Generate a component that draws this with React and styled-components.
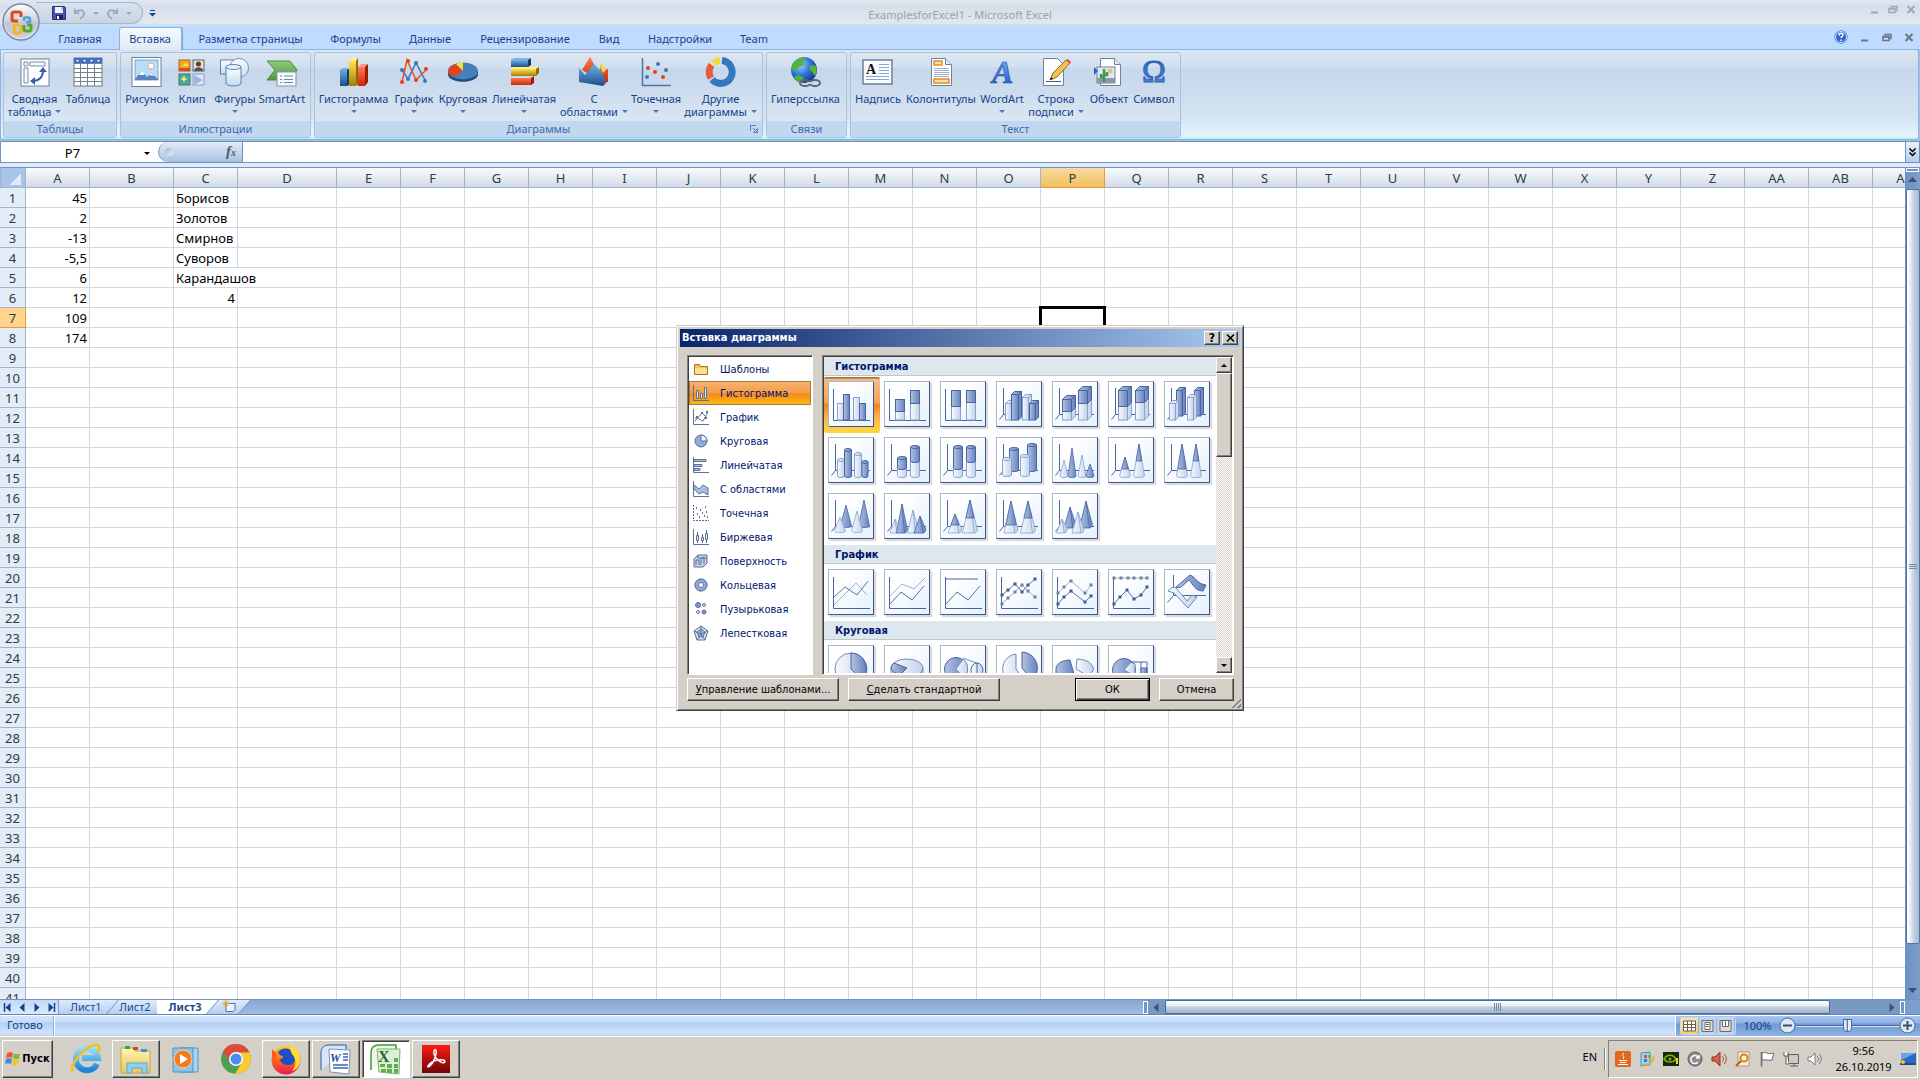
import React from 'react';
import styled, { createGlobalStyle } from 'styled-components';

const UI = `"Noto Sans", "Open Sans", sans-serif`;
const DLG = `"DejaVu Sans Condensed", "Noto Sans", sans-serif`;

const GlobalStyle = createGlobalStyle`
  * { box-sizing: border-box; }
  html, body, #root { height: 100%; }
  body { margin: 0; overflow: hidden; font-family: ${UI}; font-size: 11px; }
  button, input { font: inherit; color: inherit; border: 0; padding: 0; margin: 0; background: none; border-radius: 0; }
  button { cursor: default; }
  svg { display: block; flex: none; overflow: visible; }
`;

const Desktop = styled.div`
  height: 100vh;
  display: flex;
  flex-direction: column;
`;

const Window = styled.main`
  position: relative;
  flex: 1;
  min-height: 0;
  display: flex;
  flex-direction: column;
  background: #a3bfe3;
`;

/* ---------- title bar ---------- */

const TitleBar = styled.header`
  position: relative;
  height: 26px;
  flex: none;
  display: grid;
  grid-template-columns: 1fr auto 1fr;
  align-items: center;
  background: linear-gradient(#dfe8f1 0, #d6deea 6px, #e2e7ee 22px, #e2e7ee 24px, #c3d8ec 24px, #dce9f7 26px);
`;

const QuickAccess = styled.div`
  margin-left: 36px;
  display: flex;
  align-items: center;
  gap: 6px;
`;

const QuickBar = styled.div`
  width: 107px;
  height: 22px;
  padding-left: 16px;
  display: flex;
  align-items: center;
  gap: 7px;
  border: 1px solid #a9b9cf;
  border-left: 0;
  border-radius: 0 12px 12px 0;
  background: linear-gradient(#d9e2ee, #c9d5e5);
`;

const IconButton = styled.button`
  display: flex;
  align-items: center;
  justify-content: center;
`;

const Title = styled.h1`
  margin: 0;
  padding-top: 2px;
  font-size: 11px;
  font-weight: 400;
  color: #a0a0a0;
`;

const WindowButtons = styled.div`
  justify-self: end;
  display: flex;
  gap: ${p => p.$gap}px;
  padding-right: ${p => p.$pad}px;
  padding-bottom: ${p => p.$lift || 0}px;
  margin-left: auto;
  align-items: center;
`;

const OfficeButton = styled.button`
  position: absolute;
  z-index: 3;
  left: 2px;
  top: 3px;
`;

/* ---------- ribbon ---------- */

const TabRow = styled.nav`
  height: 23px;
  flex: none;
  display: flex;
  align-items: flex-end;
  padding-left: 45px;
  background: #bfdbff;
`;

const RibbonTab = styled.button`
  width: ${p => p.$w}px;
  height: 22px;
  padding-top: 1px;
  text-align: center;
  white-space: nowrap;
  color: #15428b;
  position: relative;
  isolation: isolate;

  ${p => p.$active && `
    height: 23px;
    margin-bottom: -1px;
    padding-top: 0;
    &::before {
      content: '';
      position: absolute;
      z-index: -1;
      inset: 0 3px 0 4px;
      border: 1px solid #8db2e3;
      border-bottom: 0;
      border-radius: 3px 3px 0 0;
      background: linear-gradient(#f4f9ff, #e1eaf5);
      box-shadow: 1px 0 1px #7fa9dd;
    }
  `}
`;

const Ribbon = styled.section`
  height: 91px;
  flex: none;
  margin: 0 1px 2px 0;
  padding: 2px;
  display: flex;
  gap: 3px;
  border: 1px solid #8db2e3;
  border-bottom-color: #8fb2d8;
  border-radius: 0 3px 3px 3px;
  background: linear-gradient(#dbe6f4 0, #cfddeb 17px, #c6d7ed 18px, #c9d9ee 32px, #d6e5f3 68px, #e3f4ff 87px, #b6f1f7 88px);
`;

const Group = styled.div`
  width: ${p => p.$w}px;
  height: 86px;
  display: flex;
  flex-direction: column;
  border: 1px solid #a9c3de;
  border-radius: 3px;
  overflow: hidden;
  background: linear-gradient(#dde7f2 0, #d2dfee 14px, #c7d7ec 15px, #cad9ec 30px, #d9e6f3 68px);
`;

const GroupButtons = styled.div`
  flex: 1;
  display: flex;
  padding-left: 2px;
`;

const GroupLabel = styled.div`
  height: 16px;
  display: grid;
  grid-template-columns: 16px 1fr 16px;
  align-items: center;
  justify-items: center;
  line-height: 16px;
  color: #3e6aaa;
  background: #c1d8f0;
`;

const BigButton = styled.button`
  width: ${p => p.$w}px;
  padding-top: 3px;
  display: flex;
  flex-direction: column;
  align-items: center;
  color: #15428b;
  line-height: 13px;
  white-space: nowrap;

  svg { margin-bottom: 4px; }
`;

const Line = styled.span`
  height: 13px;
  display: flex;
  align-items: center;
  gap: 4px;
`;

const Caret = styled.i`
  border: 3px solid transparent;
  border-top-color: ${p => p.$color || '#4a76b5'};
  border-bottom: 0;
  ${p => p.$up && 'transform: rotate(180deg);'}
`;

/* ---------- formula bar ---------- */

const FormulaBar = styled.div`
  height: 26px;
  flex: none;
  display: flex;
  border-bottom: 1px solid #6f93bd;
  background: #dfeafa;
  padding-bottom: 4px;
  box-shadow: 0 -1px 0 #6f93bd;
`;

const NameBox = styled.label`
  width: 158px;
  padding-top: 2px;
  display: flex;
  align-items: center;
  background: #fff;
  border-bottom: 1px solid #6f93bd;
  border-left: 1px solid #6f93bd;
  font-size: 13px;

  input { width: 143px; text-align: center; outline: 0; }
`;

const FxBox = styled.div`
  width: 85px;
  background: #fff;
  border-bottom: 1px solid #6f93bd;
  border-right: 1px solid #6f93bd;
  display: flex;
`;

const FxPill = styled.div`
  flex: 1;
  display: flex;
  align-items: center;
  justify-content: space-between;
  padding: 0 6px;
  border-left: 1px solid #6f93bd;
  border-radius: 11px 0 0 11px;
  background: linear-gradient(#e4ecf7, #a9c1e3);
`;

const Knob = styled.i`
  width: 8px;
  height: 8px;
  border-radius: 50%;
  background: linear-gradient(135deg, #a8b4c6, #eef2f8);
`;

const FxButton = styled.button`
  font-family: "Liberation Serif", serif;
  font-style: italic;
  font-weight: 700;
  font-size: 15px;
  line-height: 16px;
  color: #4b5a6e;

  small { font-size: 10px; }
`;

const FormulaInput = styled.input`
  flex: 1;
  background: #fff;
  border-bottom: 1px solid #6f93bd;
  outline: 0;
`;

const ExpandButton = styled(IconButton)`
  width: 15px;
  border: 1px solid #6f93bd;
  border-top: 0;
  background: linear-gradient(#e9f0fa, #b6cdee);
`;

/* ---------- sheet ---------- */

const SheetArea = styled.div`
  flex: 1;
  min-height: 0;
  display: flex;
`;

const SheetView = styled.div`
  flex: 1;
  min-width: 0;
  overflow: hidden;
  background: #fff;
`;

const Grid = styled.table`
  table-layout: fixed;
  width: 0;
  border-collapse: separate;
  border-spacing: 0;
  font-size: 13px;
  line-height: 18px;
`;

const ColHead = styled.th`
  height: 20px;
  padding: 0;
  font-weight: 400;
  color: #27413e;
  border-right: 1px solid ${p => (p.$on ? '#f29536' : '#9eb6ce')};
  border-bottom: 1px solid ${p => (p.$on ? '#f29536' : '#9eb6ce')};
  background: ${p => (p.$on ? 'linear-gradient(#f9d99f, #f1c15f)' : 'linear-gradient(#f9fcfd, #d3dbe9)')};
`;

const Corner = styled.td`
  padding: 0;
  border: 1px solid #9eb6ce;
  border-top: 0;
  background: #a9c4e9;

  &::after {
    content: '';
    display: block;
    margin: 3px 4px 0 auto;
    width: 11px;
    height: 11px;
    background: linear-gradient(135deg, transparent 50%, #e2eaf6 50%);
  }
`;

const RowHead = styled.th`
  height: 20px;
  padding: 0;
  font-weight: 400;
  color: #27413e;
  border-right: 1px solid ${p => (p.$on ? '#f29536' : '#9eb6ce')};
  border-bottom: 1px solid ${p => (p.$on ? '#f29536' : '#9eb6ce')};
  background: ${p => (p.$on ? '#ffd58d' : '#e4ecf7')};
`;

const Cell = styled.td`
  position: relative;
  height: 20px;
  padding: 0 2px;
  white-space: nowrap;
  text-align: ${p => (p.$num ? 'right' : 'left')};
  color: #000;
  border-right: 1px solid ${p => (p.$spill ? 'transparent' : '#d0d7e5')};
  border-bottom: 1px solid #d0d7e5;
`;

const Selection = styled.div`
  position: absolute;
  inset: -2px;
  border: 3px solid #000;
`;

const VScroll = styled.div`
  width: 15px;
  flex: none;
  display: flex;
  flex-direction: column;
  align-items: center;
  background: linear-gradient(90deg, #6a8fc4, #7f9fca);
`;

const Splitter = styled.i`
  width: ${p => (p.$side ? 5 : 13)}px;
  height: ${p => (p.$side ? 13 : 4)}px;
  flex: none;
  border: 1px solid #fff;
  background: #7094c4;
`;

const ScrollArrow = styled(IconButton)`
  flex: none;
  width: ${p => (p.$side ? 17 : 15)}px;
  height: ${p => (p.$side ? 14 : 17)}px;
`;

const VThumb = styled.div`
  width: 14px;
  flex: 754;
  display: flex;
  align-items: center;
  justify-content: center;
  border: 1px solid #5375a6;
  border-radius: 2px;
  background: linear-gradient(90deg, #fff 1px, #e3e9f2 4px, #c0cedf 7px, #a9bcd4 12px);
`;

const Filler = styled.div`
  flex: ${p => p.$n};
`;

const BottomBar = styled.div`
  height: 16px;
  flex: none;
  display: flex;
  align-items: stretch;
  border-top: 1px solid #6f93bd;
  border-bottom: 1px solid #5b86bb;
  background: linear-gradient(#86a6d2, #a3bde2);
`;

const SheetNav = styled.div`
  width: 59px;
  padding-left: 4px;
  display: flex;
  align-items: center;
  gap: 5px;
  border-right: 1px solid #7f9fca;
  background: linear-gradient(#c2d8f7, #dbe9fb);
`;

const SheetTabs = styled.div`
  flex: 1;
  display: flex;
`;

const SheetTab = styled.button`
  position: relative;
  isolation: isolate;
  width: ${p => p.$w}px;
  margin-right: -12px;
  padding-right: ${p => (p.$icon ? 0 : 6)}px;
  z-index: ${p => p.$z};
  display: flex;
  align-items: flex-start;
  justify-content: center;
  line-height: 13px;
  color: #1e4a8c;
  font-weight: ${p => (p.$active ? 700 : 400)};
  background: #6f93bd;
  clip-path: polygon(0 0, 100% 0, calc(100% - 12px) 100%, 0 100%);

  &::before {
    content: '';
    position: absolute;
    z-index: -1;
    inset: 0 1px 0 0;
    background: ${p => (p.$active ? '#fff' : 'linear-gradient(#dfebfb, #b5cef0)')};
    clip-path: polygon(0 0, 100% 0, calc(100% - 12px) 100%, 0 100%);
  }
`;

const HScroll = styled.div`
  width: 762px;
  display: flex;
  align-items: center;
  background: #7898c4;
`;

const HThumb = styled.div`
  flex: 665;
  height: 14px;
  display: flex;
  align-items: center;
  justify-content: center;
  border: 1px solid #4b6a99;
  border-radius: 2px;
  background: linear-gradient(#fff 0, #e6ebf2 5px, #c4cfde 6px, #a5b6cd 12px);
`;

const ScrollCorner = styled.div`
  width: 15px;
  background: #7b9dd0;
`;

/* ---------- status bar ---------- */

const StatusBar = styled.footer`
  height: 21px;
  flex: none;
  display: flex;
  align-items: stretch;
  border-top: 1px solid #fff;
  color: #15428b;
  background: linear-gradient(#d7e6fa 0, #c6dbf8 6px, #b0cff5 7px, #d2e3f9 17px, #c0d3ef 20px);
`;

const StatusText = styled.div`
  width: 54px;
  padding-left: 7px;
  line-height: 17px;
  border-right: 1px solid #8fb0dd;
  box-shadow: 1px 0 0 #fff;
`;

const StatusRight = styled.div`
  width: 245px;
  margin-left: auto;
  padding: 0 4px 1px;
  display: flex;
  align-items: center;
  border-left: 1px solid #fff;
  background: linear-gradient(#a9c7ef 0, #8fb3e4 7px, #6f9ad2 8px, #8eb2e3 20px);
`;

const ViewButtons = styled.div`
  height: 18px;
  display: flex;
  border: 1px solid #c5daf5;
  border-radius: 2px;
`;

const ViewButton = styled(IconButton)`
  width: 18px;
  background: ${p => (p.$on ? 'linear-gradient(#fde3b0, #f8cb72)' : '#c0d4ee')};
  border-right: 1px solid #8eb0de;
`;

const Zoom = styled.label`
  flex: 1;
  min-width: 0;
  display: flex;
  align-items: center;

  span { width: 43px; text-align: center; }
`;

const ZoomRange = styled.input`
  appearance: none;
  flex: 1;
  width: 0;
  min-width: 0;
  height: 18px;
  background: linear-gradient(transparent 8px, #46699c 8px, #46699c 9px, #d5e4f7 9px, #d5e4f7 10px, transparent 10px);

  &::-webkit-slider-thumb {
    appearance: none;
    width: 9px;
    height: 13px;
    background: linear-gradient(90deg, #fff, #a9bcd9 45%, #5e7aa8 50%, #e8eff9 60%);
    border: 1px solid #46699c;
    border-radius: 1px 1px 5px 5px;
  }
`;

/* ---------- classic dialog ---------- */

const Overlay = styled.div`
  position: absolute;
  z-index: 5;
  inset: 0;
  display: grid;
  place-items: center;
`;

const Dialog = styled.section`
  width: 568px;
  padding: 2px 3px 9px;
  border: 1px solid #d4d0c8;
  border-right-color: #404040;
  border-bottom-color: #404040;
  box-shadow: inset 1px 1px 0 #fff, inset -1px -1px 0 #808080;
  background: #d4d0c8;
  font-family: ${DLG};
  position: relative;
`;

const DialogTitle = styled.div`
  height: 18px;
  margin-top: 1px;
  padding: 0 2px;
  display: flex;
  align-items: center;
  gap: 2px;
  color: #fff;
  background: linear-gradient(90deg, #0a246a, #a6caf0);

  h2 { flex: 1; margin: 0; font-size: 11px; line-height: 18px; }
`;

const raised = `
  border: 1px solid #fff;
  border-right-color: #404040;
  border-bottom-color: #404040;
  box-shadow: inset -1px -1px 0 #808080;
  background: #d4d0c8;
`;

const sunken = `
  border: 1px solid #808080;
  border-right-color: #fff;
  border-bottom-color: #fff;
  box-shadow: inset 1px 1px 0 #404040;
`;

const TitleButton = styled.button`
  width: 16px;
  height: 14px;
  display: flex;
  align-items: center;
  justify-content: center;
  color: #000;
  font-weight: 700;
  font-size: 12px;
  line-height: 12px;
  ${raised}
`;

const DialogBody = styled.div`
  display: flex;
  justify-content: space-between;
  height: 320px;
  margin: 8px 6px 3px 7px;
`;

const TypeList = styled.div`
  width: 126px;
  padding: 1px;
  background: #fff;
  ${sunken}
`;

const TypeItem = styled.button`
  width: 100%;
  height: 24px;
  padding-left: 4px;
  display: flex;
  align-items: center;
  gap: 11px;
  white-space: nowrap;
  color: #00156e;

  ${p => p.$on && `
    padding-left: 3px;
    border: 1px solid #a77a3a;
    background: linear-gradient(#f5b26e 0, #f79c45 11px, #f58a1c 12px, #fdb913 22px);
  `}
`;

const Gallery = styled.div`
  width: 412px;
  padding: 1px;
  display: flex;
  background: #fff;
  ${sunken}
`;

const GalleryList = styled.div`
  flex: 1;
  min-width: 0;
  overflow: hidden;
`;

const GalleryHead = styled.h3`
  height: 19px;
  margin: 0;
  padding-left: 11px;
  font-size: 11px;
  line-height: 19px;
  color: #00156e;
  background: #dde7ee;
  border-bottom: 1px solid #c5c5c5;
`;

const Thumbs = styled.div`
  display: flex;
  flex-wrap: wrap;
  gap: 10px;
  padding: 5px 0 6px 4px;
`;

const Thumb = styled.button`
  width: 46px;
  height: 46px;
  border: 1px solid #a7b8cc;
  border-right: 1px solid #3f5789;
  border-bottom: 1px solid #3f5789;
  box-shadow: 2px 2px 1px #d9d9de;
  background: linear-gradient(135deg, #fff 30%, #e2f0fd);

  ${p => p.$on && `
    width: 56px;
    height: 56px;
    margin: -4px -6px -6px -4px;
    padding: 1px;
    border: 4px solid transparent;
    border-width: 4px 6px 6px 4px;
    border-radius: 2px;
    box-shadow: inset 1px 1px 0 #a7b8cc, inset -1px -1px 0 #3f5789;
    background:
      linear-gradient(135deg, #fff 30%, #e2f0fd) padding-box,
      linear-gradient(#a5733c 2%, #f3bd8a 4%, #f6a25a 45%, #f0851f 50%, #fcb84a 75%, #ffd83d) border-box;
  `}
`;

const ClassicScroll = styled.div`
  width: 16px;
  display: flex;
  flex-direction: column;
  background: repeating-conic-gradient(#fff 0 25%, #d4d0c8 0 50%) 0 0 / 2px 2px;
`;

const ClassicPart = styled.button`
  width: 16px;
  height: ${p => p.$h}px;
  display: flex;
  align-items: center;
  justify-content: center;
  ${raised}
`;

const DialogButtons = styled.div`
  display: flex;
  gap: 9px;
  padding: 0 6px 0 7px;
`;

const ClassicButton = styled.button`
  width: ${p => p.$w}px;
  height: 23px;
  margin-left: ${p => (p.$push ? 'auto' : 0)};
  color: #000;
  white-space: nowrap;
  ${raised}
  ${p => p.$default && 'border-color: #000; box-shadow: inset 1px 1px 0 #fff, inset -1px -1px 0 #404040, inset -2px -2px 0 #808080;'}
`;

const Grip = styled.i`
  position: absolute;
  right: 2px;
  bottom: 2px;
  width: 12px;
  height: 12px;
  background: repeating-linear-gradient(135deg, #d4d0c8 0 2px, #808080 2px 4px);
  clip-path: polygon(100% 0, 100% 100%, 0 100%);
`;

/* ---------- taskbar ---------- */

const Taskbar = styled.footer`
  height: 44px;
  flex: none;
  display: flex;
  align-items: center;
  padding: 0 2px;
  border-top: 1px solid #fff;
  background: #d4d0c8;
  color: #000;
`;

const StartButton = styled.button`
  width: 51px;
  height: 38px;
  margin-right: 9px;
  display: flex;
  align-items: center;
  justify-content: center;
  gap: 1px;
  font-family: ${DLG};
  font-weight: 700;
  ${raised}
`;

const TaskButton = styled.button`
  width: 48px;
  height: 38px;
  margin-right: 2px;
  display: flex;
  align-items: center;
  justify-content: center;
  ${p => p.$state === 'open' && raised}
  ${p => p.$state === 'active' && sunken + 'background: #fff;'}
`;

const Lang = styled.span`
  margin-left: auto;
  padding-right: 7px;
  height: 22px;
  line-height: 18px;
  border-right: 1px solid #808080;
  box-shadow: 1px 0 0 #fff;
`;

const Tray = styled.div`
  width: 310px;
  height: 38px;
  margin-left: 3px;
  padding-left: 2px;
  display: flex;
  align-items: center;
  border: 1px solid #808080;
  border-right-color: #fff;
  border-bottom-color: #fff;
`;

const TrayButton = styled(IconButton)`
  width: 24px;
  height: 24px;
`;

const Clock = styled.time`
  flex: 1;
  text-align: center;
  line-height: 16px;
`;

/* ---------- drawings ---------- */

const I32 = p => <svg width="32" height="32" viewBox="0 0 32 32" {...p} />;
const I16 = p => <svg width="16" height="16" viewBox="0 0 16 16" fill="none" stroke="#5b7099" {...p} />;

const grad = (id, stops, horizontal) => (
  <linearGradient id={id} x1="0" y1="0" x2={horizontal ? 1 : 0} y2={horizontal ? 0 : 1}>
    {stops.map((c, i) => <stop key={i} offset={i / (stops.length - 1)} stopColor={c} />)}
  </linearGradient>
);

const Defs = () => (
  <svg width="0" height="0" style={{ position: 'absolute' }} aria-hidden="true">
    <defs>
      {grad('lt', ['#f8fbff', '#c3d2eb'], true)}
      {grad('dk', ['#b3c3e2', '#6582c0'], true)}
      {grad('blue', ['#6db3ee', '#1f4e86'])}
      {grad('gold', ['#ffe34a', '#a77c0c'])}
      {grad('red', ['#ff7a4d', '#c42a0c'])}
      {grad('green', ['#8fc97a', '#4e9a3d'])}
      {grad('glass', ['#ffffff', '#c3daf2'])}
      {grad('wa', ['#7fb4ff', '#1c55c4'])}
      {grad('om', ['#2e62b5', '#4a8de0'])}
      {grad('pdf', ['#ff1a12', '#6d0606'])}
      {grad('folder', ['#fff3b5', '#e9c658'])}
      {grad('fox', ['#ffd23e', '#ff6a1a', '#e8165c'])}
      {grad('ie', ['#8fe0ff', '#1b86d8'])}
      {grad('orb', ['#ffffff', '#c8d0dc', '#eef2f7'])}
      <radialGradient id="globe" cx="0.35" cy="0.3" r="0.8">
        <stop offset="0" stopColor="#9fd3ff" /><stop offset="0.5" stopColor="#2d73d6" /><stop offset="1" stopColor="#0b2c74" />
      </radialGradient>
    </defs>
  </svg>
);

const OfficeOrb = () => (
  <svg width="38" height="38" viewBox="0 0 38 38">
    <circle cx="19" cy="19" r="18" fill="url(#orb)" stroke="#7d8896" strokeWidth="1.4" />
    <path d="M3 19a16 16 0 0 0 32 0z" fill="#b9c3d2" opacity=".7" />
    <g fill="none" strokeWidth="3" strokeLinejoin="round">
      <path d="M16 18h-4a2 2 0 0 1-2-2v-5a2 2 0 0 1 2-2h5a2 2 0 0 1 2 2v3" stroke="#e0481a" />
      <path d="M22 18v-2a1.500 1.500 0 0 1 1.500-1.500h3a1.500 1.500 0 0 1 1.500 1.500v3h-4" stroke="#4f9fdf" strokeWidth="2.500" />
      <path d="M17 22h-3a2 2 0 0 0-2 2v4a2 2 0 0 0 2 2h3a2 2 0 0 0 2-2v-6" stroke="#f8b418" />
      <path d="M22 22v4a2 2 0 0 0 2 2h3a2 2 0 0 0 2-2v-4h-4" stroke="#5aa532" />
    </g>
  </svg>
);

const Floppy = () => (
  <svg width="14" height="14" viewBox="0 0 14 14">
    <path d="M.5.5h12l1 1v12H.5z" fill="#4b52b4" stroke="#2b2f7c" />
    <path d="M3 1h8v6H3z" fill="#f2f5fc" /><path d="M9 1h2v3H9z" fill="#a7c5ef" />
    <path d="M4 9h7v4H4z" fill="#20225a" /><path d="M5 10h2v3H5z" fill="#fff" />
  </svg>
);

const Undo = ({ flip }) => (
  <svg width="13" height="13" viewBox="0 0 13 13" fill="none" stroke="#9aabc4" strokeWidth="2">
    <g transform={flip ? 'translate(13 0) scale(-1 1)' : undefined}>
      <path d="M3 5c4-3 8-2 8 2 0 3-3 3-4 5" /><path d="M1 1v6h6z" fill="#9aabc4" stroke="none" />
    </g>
  </svg>
);

const WinGlyph = ({ kind, color }) => (
  <svg width="10" height="9" viewBox="0 0 10 9" fill="none" stroke={color}>
    {kind === 'min' && <path d="M1 7.500h7" strokeWidth="2" />}
    {kind === 'max' && <path d="M3 2.500V1.500h6v4H7M1 3.500h6v4H1zM1 4h6" strokeWidth="1.500" />}
    {kind === 'close' && <path d="M1.500 1l7 7M8.500 1l-7 7" strokeWidth="2" />}
  </svg>
);

const Arrow = ({ dir, color = '#3c4f78', bar }) => {
  const d = { up: 'M0 6h9L4.500 1z', down: 'M0 2h9L4.500 7z', left: 'M6.500 0v9l-5-4.500z', right: 'M2.500 0v9l5-4.500z' }[dir];
  return (
    <svg width="9" height="9" viewBox="0 0 9 9">
      <path d={d} fill={color} />
      {bar && <path d={dir === 'left' ? 'M.5 0v9' : 'M8.500 0v9'} stroke={color} strokeWidth="1.500" />}
    </svg>
  );
};

const GripLines = ({ vertical }) => (
  <svg width="8" height="8" viewBox="0 0 8 8" stroke="#7689a5">
    <path d={vertical ? 'M0 1.500h8M0 3.500h8M0 5.500h8' : 'M.5 0v8M2.500 0v8M4.500 0v8M6.500 0v8'} />
  </svg>
);

const ribbonIcons = {
  pivot: (
    <I32>
      <rect x="2" y="3" width="28" height="27" fill="#fff" stroke="#6c829e" />
      <g fill="#f4f7fb" stroke="#7b8fa8"><path d="M5 6h4v4H5zM11 6h15v4H11zM5 12h4v15H5z" /></g>
      <path d="M14 25c6 0 10-4 10-10" fill="none" stroke="#3c5fa8" strokeWidth="2" />
      <path d="M24 11l-4 5h8zM11 25l5-4v8z" fill="#3c5fa8" />
    </I32>
  ),
  table: (
    <I32>
      <rect x="2" y="2" width="28" height="28" fill="#fff" stroke="#6b7785" />
      <rect x="2" y="2" width="28" height="5" fill="#3f6fc7" />
      <path d="M2 7.500h28M2 12.500h28M2 16.500h28M2 21.500h28M2 25.500h28M8.500 7v23M15.500 7v23M22.500 7v23" stroke="#77828f" />
      <path d="M4 4h3l-1.500 2zM11 4h3l-1.500 2zM18 4h3l-1.500 2zM25 4h3l-1.500 2z" fill="#fff" />
    </I32>
  ),
  picture: (
    <I32>
      <rect x="1" y="1.500" width="29" height="29" fill="#fff" stroke="#6d7f96" />
      <rect x="4" y="4" width="23" height="20" fill="#b9dcfb" stroke="#7da3cf" />
      <circle cx="20" cy="10" r="3" fill="#fff" stroke="#f3a873" />
      <path d="M4 23l7-8 5 6 4-4 7 6v1H4z" fill="#5c83bd" /><path d="M8 19l3-4 3 3-2 1zM18 19l2-2 3 3z" fill="#fff" />
    </I32>
  ),
  clip: (
    <I32>
      <rect x="3" y="4" width="11" height="11" fill="#f7a823" stroke="#9a6a2a" /><path d="M3 12h11v3H3z" fill="#d84c1e" /><path d="M6 10l4-3 3 3z" fill="#fbe36a" />
      <rect x="17" y="4" width="11" height="11" fill="#e5dcd5" stroke="#5b6470" /><circle cx="22.500" cy="8" r="2.500" fill="#6a3d27" /><path d="M18 15c0-5 9-5 9 0z" fill="#4d5560" />
      <rect x="3" y="18" width="11" height="11" fill="#4fa58d" stroke="#3f7f6f" /><path d="M8 19l1 3 3 1-3 1-1 3-1-3-3-1 3-1z" fill="#f4ee8e" />
      <rect x="17" y="18" width="11" height="11" fill="#dfe7f7" stroke="#8e9fc5" /><path d="M18 19l9 5-9 5z" fill="#9fb4e6" />
    </I32>
  ),
  shapes: (
    <I32>
      <rect x="1.500" y="4" width="17" height="14" fill="url(#glass)" stroke="#5f7fa6" />
      <circle cx="20" cy="12" r="9.500" fill="url(#glass)" stroke="#6c93c2" />
      <path d="M7 11v16c0 4 15 4 15 0V11z" fill="url(#glass)" stroke="#5480b3" /><ellipse cx="14.500" cy="11" rx="7.500" ry="2.500" fill="#e9f3fd" stroke="#5480b3" />
    </I32>
  ),
  smart: (
    <I32>
      <path d="M1 5h23l7 9-6 10H1l8-10z" fill="url(#green)" stroke="#4b8b3b" />
      <rect x="11" y="16" width="19" height="14" fill="#f7f9fc" stroke="#8795a8" /><path d="M14 20h2m2 0h9M14 23.500h2m2 0h9M14 26.500h2m2 0h9" stroke="#6f87a8" />
    </I32>
  ),
  column: (
    <I32>
      <path d="M2 14l3-2h5v18H2z" fill="url(#blue)" /><path d="M9 14l3-2v16l-3 2z" fill="#173c68" />
      <path d="M11 5h7v25h-7z" fill="url(#gold)" /><path d="M11 5l3-3h6l-2 3z" fill="#fff08a" /><path d="M18 5l2-3v26l-2 2z" fill="#8f6b08" />
      <path d="M20 11h7v19h-7z" fill="url(#red)" /><path d="M20 11l3-3h7l-3 3z" fill="#f59a7c" /><path d="M27 11l3-3v18l-3 4z" fill="#9c1c05" />
    </I32>
  ),
  line: (
    <I32 fill="none" strokeWidth="1.500">
      <path d="M4 14l6 9 8-16 9 17" stroke="#3a78bd" /><path d="M4 26l5-22 9 20 11-11" stroke="#e2532c" />
      <g fill="#3a78bd"><circle cx="4" cy="14" r="2" /><circle cx="10" cy="23" r="2" /><circle cx="18" cy="7" r="2" /><circle cx="27" cy="25" r="2" /></g>
      <g fill="#e2431c"><circle cx="4" cy="26" r="2" /><circle cx="10" cy="5" r="2" /><circle cx="18" cy="24" r="2" /><circle cx="28" cy="13" r="2" /></g>
    </I32>
  ),
  pie: (
    <I32>
      <path d="M1 15v4c2 9 28 9 30 0v-4z" fill="#1e4c80" /><ellipse cx="16" cy="15" rx="15" ry="8.500" fill="#4580ba" />
      <path d="M16 15L6 21c-7-3-7-10 3-13z" fill="#e2431c" /><path d="M16 15L9 8c2-1 4-2 7-2z" fill="#f7dd3d" />
    </I32>
  ),
  bar: (
    <I32>
      <path d="M3 4h17v7H3z" fill="url(#blue)" /><path d="M3 4l3-2h17l-3 2z" fill="#7fb5e6" /><path d="M20 4l3-2v7l-3 2z" fill="#173c68" />
      <path d="M3 13h25v7H3z" fill="url(#gold)" /><path d="M3 13l3-2h25l-3 2z" fill="#fff08a" /><path d="M28 13l3-2v6l-3 3z" fill="#8f6b08" />
      <path d="M3 22h20v7H3z" fill="url(#red)" /><path d="M23 22l3-2v7l-3 2z" fill="#9c1c05" />
    </I32>
  ),
  area: (
    <I32>
      <path d="M4 14l8-13 9 16 2-9 3 6 4-1v13l-5 1z" fill="url(#red)" /><path d="M22 11l2-3 4 6-3 3z" fill="#f7d83a" />
      <path d="M1 12l6 7 9-11 8 8 4 11-3 3L1 26z" fill="url(#blue)" />
    </I32>
  ),
  scatter: (
    <I32>
      <path d="M2.500 2v27.500H31" fill="none" stroke="#4a76a8" strokeWidth="1.500" />
      <g fill="#3a78bd"><circle cx="18" cy="8" r="2" /><circle cx="26" cy="14" r="2" /><circle cx="7" cy="21" r="2" /></g>
      <g fill="#e2431c"><circle cx="8" cy="12" r="2" /><circle cx="15" cy="16" r="2" /><circle cx="23" cy="21" r="2" /></g>
    </I32>
  ),
  donut: (
    <I32 fill="none" strokeWidth="7">
      <path d="M17 4.500A11.500 11.500 0 1 1 7 23.500" stroke="#3577be" /><path d="M6 22A11.500 11.500 0 0 1 6.500 9" stroke="#ea5a33" /><path d="M8.500 7A11.500 11.500 0 0 1 15 4.500" stroke="#f5dc3a" />
    </I32>
  ),
  link: (
    <I32>
      <circle cx="14" cy="14" r="13" fill="url(#globe)" />
      <path d="M4 6c4-4 9-5 12-4l-3 4 1 3-5 2-3 4-4-1c0-3 0-6 2-8zM21 9l5 1c1 4 1 7-1 10l-3-4-3-4zM8 19l5 2 1 4-3 2c-4-1-6-4-7-6z" fill="#52b43a" />
      <g fill="none" stroke="#59677a" strokeWidth="2"><ellipse cx="15" cy="27" rx="5" ry="3" /><ellipse cx="25" cy="27" rx="5" ry="3" /><path d="M17 27h6" stroke="#c8d2de" /></g>
    </I32>
  ),
  textbox: (
    <I32>
      <rect x="1" y="4" width="29" height="24" fill="#f8fbff" stroke="#69809c" strokeWidth="1.500" />
      <text x="4" y="18" fontFamily="Liberation Serif, serif" fontWeight="700" fontSize="14" fill="#111">A</text>
      <path d="M17 8.500h10M17 11.500h10M17 14.500h10M17 17.500h10M4 20.500h23M4 23.500h23" stroke="#8aa5cc" />
    </I32>
  ),
  header: (
    <I32>
      <path d="M6.500 2.500h14l6 6v21h-20z" fill="#fff" stroke="#6c829e" /><path d="M20.500 2.500v6h6" fill="#dfe9f5" stroke="#6c829e" />
      <path d="M9 5h8v4H9zM9 23h15v4H9z" fill="#fde0b0" stroke="#e38b25" strokeWidth="1.500" />
      <path d="M9 12.500h15M9 14.500h15M9 16.500h15M9 18.500h15M9 20.500h15" stroke="#9bb0cc" />
    </I32>
  ),
  wordart: (
    <I32><text x="6" y="27" fontFamily="Liberation Serif, serif" fontWeight="700" fontStyle="italic" fontSize="32" fill="url(#wa)" stroke="#1d4a9c" strokeWidth=".6">A</text></I32>
  ),
  sign: (
    <I32>
      <path d="M3.500 2.500h14l6 6v21h-20z" fill="#fff" stroke="#6c829e" /><path d="M6 25.500h15" stroke="#4a5a70" />
      <path d="M10 24l3-7L26 4l4 3-13 14z" fill="#f3c34c" stroke="#8a6a2c" /><path d="M26 4l2-1 3 3-1 2z" fill="#d9555c" /><path d="M10 24l1-3 2 2z" fill="#222" />
    </I32>
  ),
  object: (
    <I32>
      <path d="M7.500 2.500h14l6 6v21h-20z" fill="#fff" stroke="#6c829e" /><path d="M21.500 2.500v6h6" fill="#dfe9f5" stroke="#6c829e" />
      <rect x="4" y="11" width="18" height="16" fill="#dcebfb" stroke="#6c829e" /><path d="M4 22h18v5H4z" fill="#8d99aa" />
      <path d="M11 13v13M8 18v3h3M14 16v3h-3" stroke="#3f9a46" strokeWidth="2.500" fill="none" /><circle cx="17" cy="15" r="2.500" fill="#f4bf6c" /><path d="M1 11l4 4-4 4z" fill="#2f62c9" />
    </I32>
  ),
  symbol: (
    <I32><text x="16" y="26" textAnchor="middle" fontFamily="Liberation Serif, serif" fontWeight="400" fontSize="32" fill="url(#om)" stroke="#2e62b5">Ω</text></I32>
  ),
};

/* chart gallery pictures, all in a 44 x 44 box */

const EDGE = { lt: '#8aa2cf', dk: '#4a64a0' };

const Box = ({ x, y, w, b, f, d = 0 }) => (
  <g fill={`url(#${f})`} stroke={EDGE[f]}>
    <rect x={x} y={y} width={w} height={b - y} />
    {d > 0 && <path d={`M${x} ${y}l${d}-${d}h${w}l-${d} ${d}zM${x + w} ${y}l${d}-${d}v${b - y}l-${d} ${d}z`} />}
  </g>
);

const Can = ({ x, y, w, b, f }) => (
  <g fill={`url(#${f})`} stroke={EDGE[f]}>
    <path d={`M${x} ${y}v${b - y}a${w / 2} 1.500 0 0 0 ${w} 0v-${b - y}z`} />
    <ellipse cx={x + w / 2} cy={y} rx={w / 2} ry="1.500" />
  </g>
);

// cone or pyramid, with an optional darker tip that ends at "cut"
const Spike = ({ x, y, b, w = 9, f, cut, pyr }) => {
  const half = w / 2;
  const k = cut ? (half * (cut - y)) / (b - y) : 0;
  const base = pyr ? `L${x + half - 2} ${b}L${x + half} ${b - 3}` : `a${half} 1.500 0 0 0 ${w} 0`;
  return (
    <g stroke={EDGE[f]} strokeWidth=".8" strokeLinejoin="round">
      <path d={`M${x} ${y}L${x - half} ${b}${base}z`} fill={`url(#${f})`} />
      {pyr && <path d={`M${x} ${y}L${x + half - 3} ${b}`} />}
      {cut && <path d={`M${x} ${y}l${-k} ${cut - y}h${2 * k}z`} fill="url(#dk)" stroke={EDGE.dk} />}
    </g>
  );
};

const Axis = ({ deep }) => (
  <path d={deep ? 'M6.500 6v26.500H41M6.500 32.500l-4 5' : 'M4.500 7v31.500H41'} fill="none" stroke="#4a64a0" />
);

const Plot = ({ pts, dots, light, w = 1 }) => (
  <g stroke={light ? '#a3b2cb' : '#5672aa'} fill="none" strokeWidth={w}>
    <polyline points={pts.map(p => p.join()).join(' ')} />
    {dots && pts.map(([x, y]) => <rect key={x} x={x - 1} y={y - 1} width="2" height="2" fill={light ? '#71829c' : '#3f5b9a'} stroke={light ? '#71829c' : '#3f5b9a'} />)}
  </g>
);

const solids = (Shape, deep, rows, d) => (
  <>
    <Axis deep={deep} />
    {rows.map(([x, y, w, b, f], i) => <Shape key={i} x={x} y={y} w={w} b={b} f={f} d={d} />)}
  </>
);

const cones = (rows, pyr) => (
  <>
    <Axis deep />
    {rows.map(([x, y, b, f, w, cut], i) => <Spike key={i} x={x} y={y} b={b} f={f} w={w} cut={cut} pyr={pyr} />)}
  </>
);

const zig = [[5, 34], [16, 22], [27, 30], [39, 16]];

const gallery = [
  {
    title: 'Гистограмма',
    items: [
      solids(Box, false, [[8.5, 21.5, 6, 38, 'lt'], [14.5, 12.5, 6, 38, 'dk'], [24.5, 15.5, 6, 38, 'lt'], [30.5, 21.5, 6, 38, 'dk']]),
      solids(Box, false, [[10.5, 29.5, 9, 38, 'lt'], [10.5, 17.5, 9, 29.5, 'dk'], [25.5, 21.5, 9, 38, 'lt'], [25.5, 8.5, 9, 21.5, 'dk']]),
      solids(Box, false, [[10.5, 24.5, 9, 38, 'lt'], [10.5, 8.5, 9, 24.5, 'dk'], [25.5, 20.5, 9, 38, 'lt'], [25.5, 8.5, 9, 20.5, 'dk']]),
      solids(Box, true, [[8.5, 21.5, 6, 38, 'lt'], [14.5, 12.5, 7, 38, 'dk'], [25.5, 15.5, 6, 38, 'lt'], [32.5, 21.5, 6, 38, 'dk']], 3),
      solids(Box, true, [[9.5, 29.5, 9, 38, 'lt'], [9.5, 17.5, 9, 29.5, 'dk'], [25.5, 21.5, 9, 38, 'lt'], [25.5, 8.5, 9, 21.5, 'dk']], 4),
      solids(Box, true, [[9.5, 24.5, 9, 38, 'lt'], [9.5, 8.5, 9, 24.5, 'dk'], [26.5, 20.5, 9, 38, 'lt'], [26.5, 8.5, 9, 20.5, 'dk']], 4),
      solids(Box, true, [[11.5, 8.5, 6, 34, 'dk'], [4.5, 21.5, 6, 38, 'lt'], [29.5, 8.5, 6, 34, 'dk'], [22.5, 15.5, 6, 38, 'lt']], 3),
      solids(Can, true, [[8.5, 22, 7, 38, 'lt'], [15.5, 12, 7, 38, 'dk'], [25.5, 16, 7, 38, 'lt'], [33, 24, 6, 38, 'dk']]),
      solids(Can, true, [[12.5, 30, 9, 38, 'lt'], [12.5, 20, 9, 30, 'dk'], [25.5, 23, 9, 38, 'lt'], [25.5, 9, 9, 23, 'dk']]),
      solids(Can, true, [[12.5, 30, 9, 38, 'lt'], [12.5, 9, 9, 30, 'dk'], [25.5, 23, 9, 38, 'lt'], [25.5, 9, 9, 23, 'dk']]),
      solids(Can, true, [[12.5, 11, 9, 32, 'dk'], [5.5, 21, 9, 37, 'lt'], [30.5, 7, 9, 32, 'dk'], [23.5, 18, 9, 37, 'lt']]),
      cones([[11, 22, 38, 'lt', 8], [19, 10, 38, 'dk', 8], [29, 17, 38, 'lt', 8], [37, 26, 38, 'dk', 8]]),
      cones([[16, 19, 38, 'lt', 11, 31], [30, 6, 38, 'lt', 11, 23]]),
      cones([[17, 6, 38, 'lt', 11, 31], [31, 6, 38, 'lt', 11, 23]]),
      cones([[17, 11, 32, 'dk', 11], [11, 23, 37, 'lt', 11], [35, 6, 32, 'dk', 11], [28, 17, 37, 'lt', 11]]),
      cones([[10, 25, 39, 'lt', 10], [17, 10, 39, 'dk', 11], [28, 16, 39, 'lt', 11], [35, 22, 39, 'dk', 12]], true),
      cones([[14, 20, 39, 'lt', 14, 31], [29, 6, 39, 'lt', 15, 24]], true),
      cones([[14, 7, 39, 'lt', 14, 31], [31, 7, 39, 'lt', 15, 24]], true),
      cones([[17, 13, 34, 'dk', 12], [9, 25, 39, 'lt', 11], [33, 7, 34, 'dk', 13], [25, 18, 39, 'lt', 12]], true),
    ],
  },
  {
    title: 'График',
    items: [
      <><Axis /><Plot light pts={[[5, 35], [27, 13], [38, 25]]} /><Plot pts={[[5, 27], [16, 17], [28, 25], [39, 11]]} /></>,
      <><Axis /><Plot light pts={[[5, 26], [17, 14], [29, 19], [40, 8]]} /><Plot pts={zig} /></>,
      <><Axis /><Plot light w={2} pts={[[5, 9], [37, 9]]} /><Plot pts={zig} /></>,
      <><Axis /><Plot dots light pts={[[5, 34], [11, 28], [18, 22], [25, 15], [31, 21], [38, 27]]} /><Plot dots pts={[[5, 25], [11, 20], [18, 14], [25, 22], [31, 15], [38, 9]]} /></>,
      <><Axis /><Plot dots light pts={[[5, 23], [11, 17], [18, 11], [32, 23], [38, 15]]} /><Plot dots pts={[[5, 34], [11, 27], [18, 21], [32, 32], [38, 26]]} /></>,
      <><Axis /><Plot dots light pts={[[5, 8], [12, 8], [19, 8], [25, 8], [32, 8], [38, 8]]} /><Plot dots pts={[[5, 34], [11, 27], [18, 20], [25, 29], [32, 25], [38, 17]]} /></>,
      <><path d="M8.500 5v20.500H41M8.500 25.500l-6 7" fill="none" stroke="#4a64a0" /><path d="M10 18L25 5c6 2 7 9 16 10l-3 6c-8 0-10-7-14-11l-8 7z" fill="url(#dk)" stroke="#4a64a0" /><path d="M3 21c3-4 7-5 9-2l10 12 5-6 5 2-9 11L9 23z" fill="url(#lt)" stroke="#6f89bd" /></>,
    ],
  },
  {
    title: 'Круговая',
    items: [
      <><circle cx="22" cy="23" r="16" fill="url(#lt)" stroke="#6f89bd" /><path d="M22 7a16 16 0 0 1 11 27L22 23z" fill="url(#dk)" stroke="#4a64a0" /></>,
      <><path d="M6 22v8c2 11 30 11 32 0v-8z" fill="url(#lt)" stroke="#6f89bd" /><ellipse cx="22" cy="22" rx="16" ry="9" fill="url(#lt)" stroke="#6f89bd" /><path d="M22 22L9 17c-4 3-4 7 2 10l4 2z" fill="url(#dk)" stroke="#4a64a0" /></>,
      <><circle cx="15" cy="23" r="11.500" fill="url(#dk)" stroke="#4a64a0" /><path d="M15 23l7-10c6 4 6 15 1 19z" fill="url(#lt)" stroke="#6f89bd" /><path d="M22 12l16 6" stroke="#6f89bd" /><ellipse cx="36" cy="24" rx="6" ry="7" fill="url(#lt)" stroke="#4a64a0" /><path d="M36 17v14" stroke="#4a64a0" /></>,
      <><path d="M19 8a15 15 0 1 0 9 28l-9-13z" fill="url(#lt)" stroke="#6f89bd" /><path d="M25 6a16 16 0 0 1 10 28L25 22z" fill="url(#dk)" stroke="#4a64a0" /></>,
      <><path d="M17 14c-8 0-14 4-14 9v7l16 6 2-8z" fill="url(#dk)" stroke="#4a64a0" /><path d="M24 13l-1 10 12 7 5-5c2-6-6-12-16-12z" fill="url(#lt)" stroke="#6f89bd" /></>,
      <><circle cx="15" cy="24" r="11.500" fill="url(#dk)" stroke="#4a64a0" /><path d="M15 24l7-8 4 2v12z" fill="url(#lt)" stroke="#6f89bd" /><path d="M22 16h16v18h-6V16" fill="#fff" stroke="#4a64a0" /><path d="M32 22h6v6h-6z" fill="url(#dk)" stroke="#4a64a0" /></>,
    ],
  },
];

const types = [
  ['Шаблоны', <I16><path d="M1.500 3.500h5l1 2h7v8h-13z" fill="#f2c454" stroke="#a57a1c" /><path d="M2 7h12v6H2z" fill="#fbe08b" stroke="none" /></I16>],
  ['Гистограмма', <I16><path d="M.5 0v15.500H16" /><path d="M3.500 5.500h2v8h-2zM7.500 8.500h2v5h-2zM11.500 2.500h2v11h-2z" fill="#dfe8f6" /></I16>],
  ['График', <I16><path d="M.5 0v15.500H16" /><path d="M2 12l7-8 5 5M2 9h2l6 3 5-9" /><path d="M3 7h2v2H3zM8 3h2v2H8zM12 8h2v2h-2zM13 2h2v2h-2z" fill="#5b7099" stroke="none" /></I16>],
  ['Круговая', <I16><circle cx="8" cy="8" r="6" fill="#8fabdc" /><path d="M8 8V2a6 6 0 0 1 6 6z" fill="#eef4fd" /></I16>],
  ['Линейчатая', <I16><path d="M.5 0v15.500H16" /><path d="M1 2.500h12v2H1zM1 7.500h8v2H1zM1 11.500h6v2H1z" fill="#a8bddf" /></I16>],
  ['С областями', <I16><path d="M.5 0v15.500H16" /><path d="M1 4l5 4 4-4 5 3v7l-5-3-4 2-5-5z" fill="#a8bddf" /></I16>],
  ['Точечная', <I16><path d="M.5 0v15.500H16" strokeDasharray="2 1" /><path d="M3 3h1M7 5h1M12 2h1M4 9h1M9 8h1M13 7h1M6 12h1M11 11h1M14 12h1" strokeWidth="2" /></I16>],
  ['Биржевая', <I16><path d="M.5 0v15.500H16" /><path d="M4.500 3v11M9.500 5v9M13.500 1v13" /><path d="M3.500 6.500h2v5h-2zM8.500 8.500h2v3h-2zM12.500 4.500h2v6h-2z" fill="#dfe8f6" /></I16>],
  ['Поверхность', <I16><path d="M1 6l4-4h9v8l-4 4H1z" fill="#c2d2ec" /><path d="M3 12V7h3v5M8 12V6l3-2v7M5 2v3h9" /></I16>],
  ['Кольцевая', <I16><circle cx="8" cy="8" r="4.500" stroke="#8fa8d6" strokeWidth="4" /><circle cx="8" cy="8" r="6" /><circle cx="8" cy="8" r="2.500" fill="#fff" /></I16>],
  ['Пузырьковая', <I16><circle cx="5" cy="4" r="2.500" fill="#7795d0" /><circle cx="11" cy="4" r="1.500" fill="#e3ebf8" /><circle cx="5" cy="11" r="1.500" /><circle cx="11" cy="11" r="2" fill="#7795d0" /></I16>],
  ['Лепестковая', <I16><path d="M8 1l7 5-3 9H4L1 6z" fill="#d5dfef" /><path d="M8 4l4 3-2 5H6L4 7z" fill="#a8bddf" /><path d="M8 1v8M15 6L8 9M12 15L8 9M4 15l4-6M1 6l7 3" /></I16>],
];

/* ---------- data ---------- */

const tabs = [['Главная', 70], ['Вставка', 70], ['Разметка страницы', 131], ['Формулы', 79], ['Данные', 70], ['Рецензирование', 120], ['Вид', 48], ['Надстройки', 94], ['Team', 54]];

// [icon, width, first line, second line, has menu]
const groups = [
  { label: 'Таблицы', w: 114, buttons: [['pivot', 57, 'Сводная', 'таблица', 1], ['table', 50, 'Таблица']] },
  { label: 'Иллюстрации', w: 191, buttons: [['picture', 48, 'Рисунок'], ['clip', 42, 'Клип'], ['shapes', 44, 'Фигуры', '', 1], ['smart', 50, 'SmartArt']] },
  { label: 'Диаграммы', w: 449, launcher: true, buttons: [['column', 73, 'Гистограмма', '', 1], ['line', 48, 'График', '', 1], ['pie', 50, 'Круговая', '', 1], ['bar', 72, 'Линейчатая', '', 1], ['area', 68, 'С', 'областями', 1], ['scatter', 56, 'Точечная', '', 1], ['donut', 73, 'Другие', 'диаграммы', 1]] },
  { label: 'Связи', w: 81, buttons: [['link', 73, 'Гиперссылка']] },
  { label: 'Текст', w: 331, buttons: [['textbox', 50, 'Надпись'], ['header', 76, 'Колонтитулы'], ['wordart', 46, 'WordArt', '', 1], ['sign', 62, 'Строка', 'подписи', 1], ['object', 44, 'Объект'], ['symbol', 46, 'Символ']] },
];

const letters = 'ABCDEFGHIJKLMNOPQRSTUVWXYZ'.split('');
const columns = [...letters, 'AA', 'AB', 'AC'];
const colWidth = { A: 64, B: 84, D: 99 };
const rows = Array.from({ length: 41 }, (_, i) => i + 1);

const cells = {
  A1: '45', A2: '2', A3: '-13', A4: '-5,5', A5: '6', A6: '12', A7: '109', A8: '174',
  C1: 'Борисов', C2: 'Золотов', C3: 'Смирнов', C4: 'Суворов', C5: 'Карандашов', C6: '4',
};

const taskIcons = [
  ['Internet Explorer', '', <svg width="32" height="32" viewBox="0 0 32 32"><path d="M27 21a11 11 0 1 1 1-6H12" fill="none" stroke="url(#ie)" strokeWidth="6" /><path d="M3 29C-3 24 16 1 27 2c4 1 2 6 0 8" fill="none" stroke="#f3c01f" strokeWidth="2.500" /></svg>],
  ['Проводник', 'open', <svg width="34" height="32" viewBox="0 0 34 32"><path d="M2 5h12l2 3h15v22H2z" fill="url(#folder)" stroke="#cda63f" /><path d="M6 3h5v3H6z" fill="#2fae46" /><path d="M14 4h5v3h-5z" fill="#d64a2a" /><path d="M22 6h6v3h-6z" fill="#3b8fe0" /><path d="M8 30V20h20v10h-5v-5H13v5z" fill="#8fd0f2" stroke="#5aa9d8" /></svg>],
  ['Проигрыватель', '', <svg width="32" height="32" viewBox="0 0 32 32"><path d="M10 5h18v24H10z" fill="#a9d4ee" stroke="#4c93c4" /><path d="M3 5h20v24H3z" fill="#8cc3e8" stroke="#4c93c4" /><circle cx="13" cy="16" r="9" fill="#f47b20" stroke="#fbd2a8" /><path d="M10 11l8 5-8 5z" fill="#fff" /></svg>],
  ['Chrome', '', <svg width="32" height="32" viewBox="0 0 32 32"><circle cx="16" cy="16" r="15" fill="#4ba14f" /><path d="M3 8.500A15 15 0 0 1 29.500 9.500H16L10 19z" fill="#dd4b3e" /><path d="M29.500 9.500A15 15 0 0 1 15 31l7-12-6-9.500z" fill="#fcc934" /><circle cx="16" cy="16" r="7" fill="#fff" /><circle cx="16" cy="16" r="5.500" fill="#4a8af4" /></svg>],
  ['Firefox', 'open', <svg width="32" height="32" viewBox="0 0 32 32"><circle cx="16" cy="17" r="14.500" fill="url(#fox)" /><path d="M8 9c5-6 14-4 16 2s1 11-6 11-6-4-9-5c3-1 4-2 4-4-2 0-4-1-5-4z" fill="#1d4fc4" /><path d="M21 1c6 5 10 11 9 18-1 5-4 8-8 9 5-6 4-13 0-17-2-3-2-6-1-10z" fill="#ffdc2e" /><path d="M2 6l5 5-2 9-3-2z" fill="#ff5a1f" /></svg>],
  ['Word', 'open', <svg width="34" height="32" viewBox="0 0 34 32"><path d="M2 27V10c0-5 3-8 8-8h17v5" fill="#d8e4f8" stroke="#2f5aa8" /><path d="M10 6l21 1-1 24-19-2z" fill="#fff" stroke="#7b93c0" /><text x="11" y="19" fontFamily="Liberation Serif, serif" fontWeight="700" fontStyle="italic" fontSize="12" fill="#1f4aa0">W</text><path d="M24 11h5M24 14h5M24 17h5M14 22h15M14 25h15" stroke="#3a66b4" strokeWidth="1.500" /></svg>],
  ['Excel', 'active', <svg width="34" height="32" viewBox="0 0 34 32"><path d="M2 27V10c0-5 3-8 8-8h17v5" fill="#eef8ea" stroke="#3f9a35" strokeWidth="1.500" /><path d="M8 6h23l-1 25-20-2z" fill="#dcefd6" stroke="#7fae74" /><path d="M11 21h5v3h-5zM18 21h5v4h-5zM25 21h4v4h-4zM12 26h5v3h-5zM18 26h5v4h-5zM25 26h4v4h-4zM25 15h4v4h-4z" fill="#5cae50" /><text x="9" y="19" fontFamily="Liberation Serif, serif" fontWeight="700" fontSize="16" fill="#1c6b1f">X</text></svg>],
  ['Acrobat', 'open', <svg width="28" height="28" viewBox="0 0 28 28"><path d="M0 0h28v28H0z" fill="url(#pdf)" /><path d="M6 21c2-4 9-7 15-6 4 1 1 4-2 2-5-2-8-8-7-11s3-1 2 3c-1 5-4 10-6 12-1 1-3 1-2 0z" fill="none" stroke="#fff" strokeWidth="1.500" /></svg>],
];

const trayIcons = [
  ['Java', <I16 stroke="none"><rect width="16" height="16" rx="2" fill="#e2661c" /><path d="M9 2c-4 3 2 3-1 6M4 9.500h8M5 11.500h6M3 13.500h10" fill="none" stroke="#fff" /></I16>],
  ['Обновления', <I16 stroke="none"><path d="M2 2l9-1v13l-9 1z" fill="#9fd0f0" stroke="#4d93c4" /><path d="M5 4h3v3H5z" fill="#e2572c" /><path d="M9 4h3v3H9z" fill="#6fb53a" /><path d="M5 8h3v3H5z" fill="#2f80d0" /><path d="M4 14c8 0 10-4 11-9" fill="none" stroke="#f2a634" strokeWidth="2" /></I16>],
  ['NVIDIA', <I16 stroke="none"><path d="M0 1h16v14H0z" fill="#1c2414" /><path d="M1 8c3-5 9-5 12 0-3 4-9 4-12 0z" fill="none" stroke="#76b900" strokeWidth="1.500" /><circle cx="7" cy="8" r="1.500" fill="#76b900" /><path d="M13 7h2v6h-2z" fill="#f0dc28" /></I16>],
  ['Синхронизация', <I16><circle cx="8" cy="8" r="7" fill="#8c8c8c" stroke="#5c5c5c" /><path d="M11 6a4 4 0 1 0 0 5M12 4v3H9" stroke="#fff" strokeWidth="1.500" /></I16>],
  ['Громкость', <I16><path d="M1 6h3l5-5v14l-5-5H1z" fill="#d8634a" stroke="#8c2c1c" /><path d="M11 5c2 2 2 4 0 6M13 3c3 3 3 7 0 10" stroke="#9a4a3a" /></I16>],
  ['Поиск', <I16><path d="M3 1h11v14H3z" fill="#f4efe6" stroke="#b59a6c" /><circle cx="9" cy="7" r="3.500" fill="#fff4dc" stroke="#e0821c" strokeWidth="2" /><path d="M6 10l-5 5" stroke="#c7541c" strokeWidth="2" /></I16>],
  ['Центр поддержки', <I16 stroke="#6b6b6b"><path d="M2.500 1v14.500" strokeWidth="1.500" /><path d="M3 2c4-2 5 2 12 0l-2 7c-5 1-6-1-10 0z" fill="#fff" /></I16>],
  ['Сеть', <I16 stroke="#5f5f5f"><path d="M5.500 3.500h10v9h-10zM7 15h8M11 12v3" fill="#c9c9c9" /><path d="M1 1v4h4V1M3 5v8h3" fill="#fff" /></I16>],
  ['Динамики', <I16 stroke="#7a7a7a"><path d="M1 6h3l4-4v12l-4-4H1z" fill="#fff" /><path d="M10 5c2 2 2 4 0 6M12 3c3 3 3 7 0 10" /></I16>],
];

/* ---------- components ---------- */

const RibbonGroup = ({ group }) => (
  <Group $w={group.w}>
    <GroupButtons>
      {group.buttons.map(([icon, w, a, b, menu]) => (
        <BigButton key={icon} $w={w}>
          {ribbonIcons[icon]}
          <Line>{a}</Line>
          <Line>{b}{menu && <Caret />}</Line>
        </BigButton>
      ))}
    </GroupButtons>
    <GroupLabel>
      <span />
      <span>{group.label}</span>
      {group.launcher && (
        <IconButton aria-label="Другие диаграммы">
          <svg width="9" height="9" viewBox="0 0 9 9" fill="none" stroke="#5e82b5"><path d="M.5 6V.5H6M3 3l4 4M7.500 3.500v4h-4z" /></svg>
        </IconButton>
      )}
    </GroupLabel>
  </Group>
);

const Sheet = () => (
  <SheetView>
    <Grid>
      <colgroup>
        <col style={{ width: 26 }} />
        {columns.map(c => <col key={c} style={{ width: colWidth[c] || 64 }} />)}
      </colgroup>
      <thead>
        <tr>
          <Corner />
          {columns.map(c => <ColHead key={c} scope="col" $on={c === 'P'}>{c}</ColHead>)}
        </tr>
      </thead>
      <tbody>
        {rows.map(r => (
          <tr key={r}>
            <RowHead scope="row" $on={r === 7}>{r}</RowHead>
            {columns.map(c => {
              const value = cells[c + r];
              return (
                <Cell key={c} $num={value && !isNaN(value.replace(',', '.'))} $spill={c + r === 'C5'}>
                  {value}
                  {c + r === 'P7' && <Selection />}
                </Cell>
              );
            })}
          </tr>
        ))}
      </tbody>
    </Grid>
  </SheetView>
);

const ChartDialog = () => (
  <Overlay>
    <Dialog role="dialog" aria-labelledby="dlg-title">
      <DialogTitle>
        <h2 id="dlg-title">Вставка диаграммы</h2>
        <TitleButton>?</TitleButton>
        <TitleButton aria-label="Закрыть">
          <svg width="9" height="8" viewBox="0 0 9 8" stroke="#000" strokeWidth="1.700"><path d="M1 .5l7 7M8 .5l-7 7" /></svg>
        </TitleButton>
      </DialogTitle>
      <DialogBody>
        <TypeList>
          {types.map(([name, icon], i) => <TypeItem key={name} $on={i === 1}>{icon}{name}</TypeItem>)}
        </TypeList>
        <Gallery>
          <GalleryList>
            {gallery.map((section, s) => (
              <React.Fragment key={section.title}>
                <GalleryHead>{section.title}</GalleryHead>
                <Thumbs>
                  {section.items.map((art, i) => (
                    <Thumb key={i} $on={s === 0 && i === 0} aria-label={`${section.title} ${i + 1}`}>
                      <svg width="44" height="44" viewBox="0 0 44 44">{art}</svg>
                    </Thumb>
                  ))}
                </Thumbs>
              </React.Fragment>
            ))}
          </GalleryList>
          <ClassicScroll>
            <ClassicPart $h={16} aria-label="Вверх"><Caret $up $color="#000" /></ClassicPart>
            <ClassicPart as="div" $h={84} />
            <Filler $n={1} />
            <ClassicPart $h={16} aria-label="Вниз"><Caret $color="#000" /></ClassicPart>
          </ClassicScroll>
        </Gallery>
      </DialogBody>
      <DialogButtons>
        <ClassicButton $w={152}><u>У</u>правление шаблонами...</ClassicButton>
        <ClassicButton $w={152}><u>С</u>делать стандартной</ClassicButton>
        <ClassicButton $w={75} $push $default>ОК</ClassicButton>
        <ClassicButton $w={75}>Отмена</ClassicButton>
      </DialogButtons>
      <Grip />
    </Dialog>
  </Overlay>
);

const ZoomSign = ({ plus }) => (
  <svg width="17" height="17" viewBox="0 0 17 17">
    <circle cx="8.500" cy="8.500" r="7.500" fill="#dbe7f6" stroke="#46699c" />
    <path d={plus ? 'M4 8.500h9M8.500 4v9' : 'M4 8.500h9'} stroke="#3f4f68" strokeWidth="2" />
  </svg>
);

const App = () => (
  <Desktop>
    <GlobalStyle />
    <Defs />
    <Window>
      <TitleBar>
        <QuickAccess>
          <QuickBar>
            <IconButton aria-label="Сохранить"><Floppy /></IconButton>
            <IconButton aria-label="Отменить"><Undo /></IconButton>
            <Caret $color="#9aa6b8" />
            <IconButton aria-label="Вернуть"><Undo flip /></IconButton>
            <Caret $color="#9aa6b8" />
          </QuickBar>
          <IconButton aria-label="Настройка панели">
            <svg width="7" height="7" viewBox="0 0 7 7"><path d="M1 .5h5" stroke="#15428b" /><path d="M0 3h7L3.500 6.500z" fill="#15428b" /></svg>
          </IconButton>
        </QuickAccess>
        <Title>ExamplesforExcel1 - Microsoft Excel</Title>
        <WindowButtons $gap={8} $pad={4} $lift={8}>
          {['min', 'max', 'close'].map(k => <IconButton key={k} aria-label={k}><WinGlyph kind={k} color="#a3a9b3" /></IconButton>)}
        </WindowButtons>
      </TitleBar>
      <OfficeButton aria-label="Office"><OfficeOrb /></OfficeButton>

      <TabRow>
        {tabs.map(([name, w]) => <RibbonTab key={name} $w={w} $active={name === 'Вставка'}>{name}</RibbonTab>)}
        <WindowButtons $gap={12} $pad={6} $lift={5}>
          <IconButton aria-label="Справка">
            <svg width="14" height="14" viewBox="0 0 14 14"><circle cx="7" cy="7" r="6" fill="#2b62d8" stroke="#15428b" /><circle cx="7" cy="7" r="5.500" fill="none" stroke="#dbe8fb" /><path d="M5 5.500c0-3 4-3 4-.5 0 1.500-2 1.500-2 3M7 9.500v1.500" fill="none" stroke="#fff" strokeWidth="1.500" /></svg>
          </IconButton>
          {['min', 'max', 'close'].map(k => <IconButton key={k} aria-label={k}><WinGlyph kind={k} color="#6b7480" /></IconButton>)}
        </WindowButtons>
      </TabRow>

      <Ribbon>
        {groups.map(g => <RibbonGroup key={g.label} group={g} />)}
      </Ribbon>

      <FormulaBar>
        <NameBox>
          <input aria-label="Имя" defaultValue="P7" />
          <Caret $color="#000" />
        </NameBox>
        <FxBox>
          <FxPill><Knob /><FxButton>f<small>x</small></FxButton></FxPill>
        </FxBox>
        <FormulaInput aria-label="Строка формул" />
        <ExpandButton aria-label="Развернуть">
          <svg width="7" height="8" viewBox="0 0 7 8" fill="none" stroke="#000" strokeWidth="1.500"><path d="M.5.5l3 3 3-3M.5 4.500l3 3 3-3" /></svg>
        </ExpandButton>
      </FormulaBar>

      <SheetArea>
        <Sheet />
        <VScroll>
          <Splitter />
          <ScrollArrow aria-label="Вверх"><Arrow dir="up" /></ScrollArrow>
          <VThumb><GripLines vertical /></VThumb>
          <Filler $n={38} />
          <ScrollArrow aria-label="Вниз"><Arrow dir="down" /></ScrollArrow>
        </VScroll>
      </SheetArea>

      <BottomBar>
        <SheetNav>
          <IconButton aria-label="Первый"><Arrow dir="left" color="#15428b" bar /></IconButton>
          <IconButton aria-label="Назад"><Arrow dir="left" color="#15428b" /></IconButton>
          <IconButton aria-label="Вперёд"><Arrow dir="right" color="#15428b" /></IconButton>
          <IconButton aria-label="Последний"><Arrow dir="right" color="#15428b" bar /></IconButton>
        </SheetNav>
        <SheetTabs>
          <SheetTab $w={60} $z={3}>Лист1</SheetTab>
          <SheetTab $w={62} $z={2}>Лист2</SheetTab>
          <SheetTab $w={62} $z={4} $active>Лист3</SheetTab>
          <SheetTab $w={44} $z={1} $icon aria-label="Вставить лист">
            <svg width="14" height="12" viewBox="0 0 14 12"><path d="M4 3.500h9v6l-2 2H4z" fill="#eef4fc" stroke="#4f6f9f" /><path d="M4 0v7M.5 3.500h7M1.500 1l5 5M6.500 1l-5 5" stroke="#e09a2c" /></svg>
          </SheetTab>
        </SheetTabs>
        <HScroll>
          <Splitter $side />
          <ScrollArrow $side aria-label="Влево"><Arrow dir="left" /></ScrollArrow>
          <HThumb><GripLines /></HThumb>
          <Filler $n={53} />
          <ScrollArrow $side aria-label="Вправо"><Arrow dir="right" /></ScrollArrow>
          <Splitter $side />
        </HScroll>
        <ScrollCorner />
      </BottomBar>

      <StatusBar>
        <StatusText>Готово</StatusText>
        <StatusRight>
          <ViewButtons>
            <ViewButton $on aria-label="Обычный">
              <svg width="14" height="12" viewBox="0 0 14 12" fill="#fff" stroke="#6b5f4c"><path d="M.5 1h12v10H.5zM.5 4.500h12M.5 7.500h12M4.500 1v10M8.500 1v10" /></svg>
            </ViewButton>
            <ViewButton aria-label="Разметка">
              <svg width="14" height="12" viewBox="0 0 14 12" fill="#dcdcdc" stroke="#6a6a6a"><path d="M1 .5h11v11H1z" /><path d="M4 2.500h5v7H4zM5 4.500h3M5 6.500h3" fill="#fff" /></svg>
            </ViewButton>
            <ViewButton aria-label="Страничный">
              <svg width="14" height="12" viewBox="0 0 14 12" fill="#dcdcdc" stroke="#6a6a6a"><path d="M1 .5h11v11H1z" /><path d="M3.500.5h3v6h-3zM6.500.5h3v6h-3z" fill="#fff" /></svg>
            </ViewButton>
          </ViewButtons>
          <Zoom>
            <span>100%</span>
            <ZoomSign />
            <ZoomRange type="range" min="0" max="100" defaultValue="50" aria-label="Масштаб" />
            <ZoomSign plus />
          </Zoom>
        </StatusRight>
      </StatusBar>

      <ChartDialog />
    </Window>

    <Taskbar>
      <StartButton>
        <svg width="16" height="15" viewBox="0 0 16 15"><path d="M2 2c2-1 4-1 6 0L7 7C5 6 3 6 1 7z" fill="#e9582a" /><path d="M9 2.500c2 1 4 1 6 0l-1 5c-2 1-4 1-6 0z" fill="#7dbb3c" /><path d="M1 8c2-1 4-1 6 0l-1 5c-2-1-4-1-6 0z" fill="#3f8ede" /><path d="M8 8.500c2 1 4 1 6 0l-1 5c-2 1-4 1-6 0z" fill="#f8c21c" /></svg>
        Пуск
      </StartButton>
      {taskIcons.map(([name, state, icon]) => <TaskButton key={name} $state={state} aria-label={name}>{icon}</TaskButton>)}
      <Lang>EN</Lang>
      <Tray>
        {trayIcons.map(([name, icon]) => <TrayButton key={name} aria-label={name}>{icon}</TrayButton>)}
        <Clock>9:56<br />26.10.2019</Clock>
        <IconButton aria-label="Рабочий стол">
          <svg width="17" height="14" viewBox="0 0 17 14"><path d="M1 1h15v10H1z" fill="#2b68c8" /><path d="M1 1h15L1 8z" fill="#6fa4e8" /><path d="M0 11h16v2H0z" fill="#274a80" /><circle cx="3" cy="10" r="2" fill="#f2c02c" /></svg>
        </IconButton>
      </Tray>
    </Taskbar>
  </Desktop>
);

export default App;
